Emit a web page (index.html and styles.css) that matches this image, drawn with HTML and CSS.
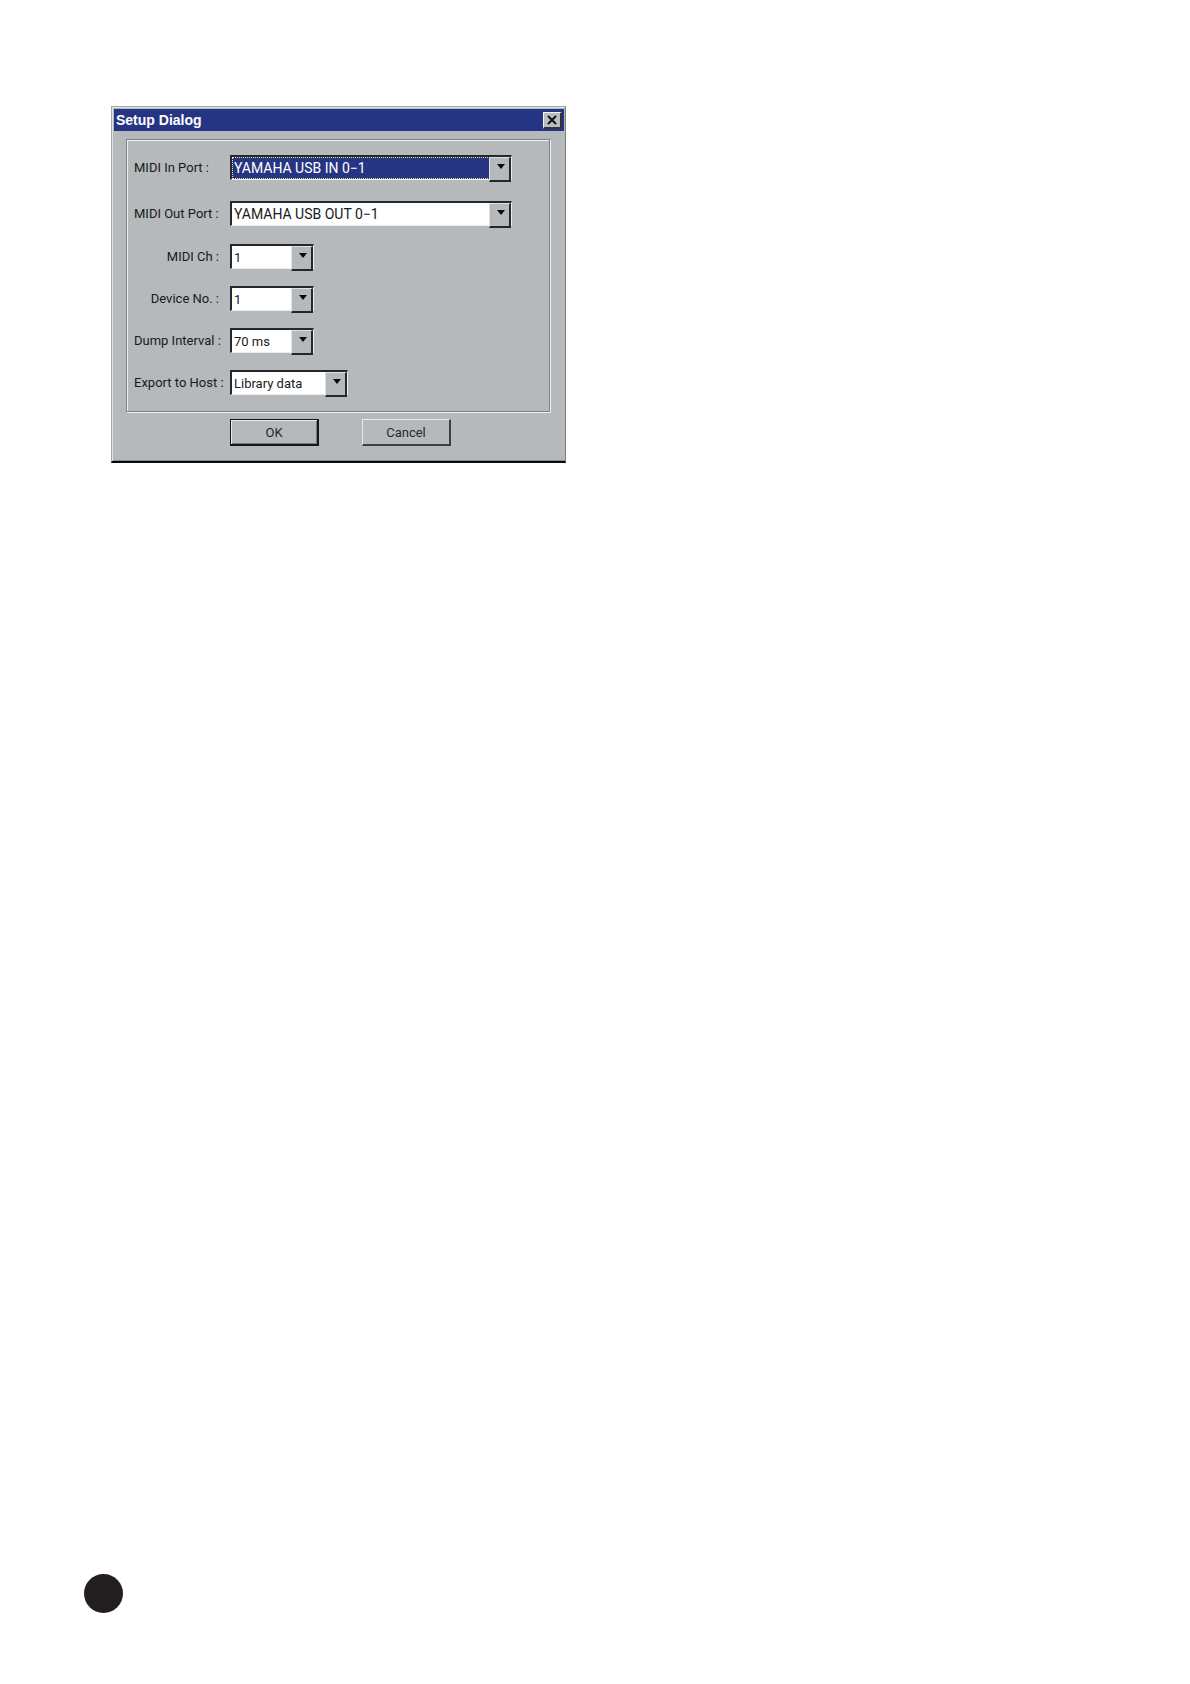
FILE: index.html
```html
<!DOCTYPE html>
<html lang="en">
<head>
  <meta charset="UTF-8">
  <title>Setup Dialog</title>
  <link rel="stylesheet" href="styles.css">
</head>
<body>

<main class="page">
  <form class="dialog" role="dialog" aria-labelledby="dialog-title">
    <header class="titlebar">
      <h1 id="dialog-title">Setup Dialog</h1>
      <button type="button" class="close" aria-label="Close">
        <svg width="12" height="10" viewBox="0 0 12 10"><path d="M2 1L10 9M10 1L2 9" stroke="#111" stroke-width="2"/></svg>
      </button>
    </header>

    <div class="content">
      <div class="settings">
        <div class="ports">
          <div class="row">
            <label for="midi-in">MIDI In Port :</label>
            <div class="combo wide active">
              <select id="midi-in"><option>YAMAHA USB IN 0−1</option></select>
            </div>
          </div>
          <div class="row">
            <label for="midi-out">MIDI Out Port :</label>
            <div class="combo wide">
              <select id="midi-out"><option>YAMAHA USB OUT 0−1</option></select>
            </div>
          </div>
        </div>
        <div class="options">
          <div class="row">
            <label for="midi-ch">MIDI Ch :</label>
            <div class="combo">
              <select id="midi-ch"><option>1</option></select>
            </div>
          </div>
          <div class="row">
            <label for="device-no">Device No. :</label>
            <div class="combo">
              <select id="device-no"><option>1</option></select>
            </div>
          </div>
          <div class="row">
            <label for="interval">Dump Interval :</label>
            <div class="combo">
              <select id="interval"><option>70 ms</option></select>
            </div>
          </div>
          <div class="row">
            <label for="export">Export to Host :</label>
            <div class="combo medium">
              <select id="export"><option>Library data</option></select>
            </div>
          </div>
        </div>
      </div>

      <div class="buttons">
        <button type="submit" class="btn default">OK</button>
        <button type="button" class="btn">Cancel</button>
      </div>
    </div>
  </form>

  <div class="page-marker"></div>
</main>

</body>
</html>
```

FILE: styles.css
```css
* {
  box-sizing: border-box;
}

body {
  margin: 0;
  background: #fff;
  color: #181a1c;
  font-family: Roboto, "Liberation Sans", sans-serif;
  font-size: 13px;
}

.page {
  min-height: 100vh;
  padding: 106px 84px 71px;
  display: flex;
  flex-direction: column;
  justify-content: space-between;
}

.dialog {
  width: 455px;
  margin-left: 27px;
  padding: 2px 1px 2px 2px;
  background: #b5b9bb;
  border: 1px solid #a3a7aa;
  border-right-color: #7b8083;
  border-bottom: 2px solid #08090a;
  box-shadow: inset 1px 1px #e0e3e4, inset 0 -1px #85898c;
}

/* title bar */
.titlebar {
  display: flex;
  align-items: center;
  justify-content: space-between;
  height: 22px;
  padding: 0 2px;
  background: #253583;
}

.titlebar h1 {
  margin: 0;
  color: #fff;
  font-family: "Liberation Sans", sans-serif;
  font-size: 14px;
  line-height: 20px;
}

.close {
  display: flex;
  align-items: center;
  justify-content: center;
  width: 19px;
  height: 17px;
  padding: 0;
  background: #b9bdbf;
  border: 1px solid #f4f5f5;
  border-right: 2px solid #303338;
  border-bottom: 2px solid #303338;
}

/* settings frame */
.content {
  padding: 8px 14px 13px 12px;
}

.settings {
  display: flex;
  flex-direction: column;
  gap: 18px;
  padding: 15px 7px 16px;
  border: 1px solid #7d8286;
  box-shadow: inset 1px 1px #eceeef, 1px 1px #eceeef;
}

.ports,
.options {
  display: flex;
  flex-direction: column;
}

.ports {
  gap: 21px;
}

.options {
  gap: 17px;
}

.row {
  display: flex;
  align-items: center;
  gap: 11px;
}

.row label {
  width: 85px;
  line-height: 16px;
  text-align: right;
  white-space: nowrap;
}

.ports label {
  text-align: left;
}

.combo {
  position: relative;
  width: 84px;
  height: 25px;
  background: #fff;
  border: 1px solid #eceeef;
  border-top: 2px solid #25282b;
  border-left: 2px solid #25282b;
}

.combo.medium {
  width: 118px;
}

.combo.wide {
  width: 282px;
}

.combo select {
  appearance: none;
  display: block;
  width: 100%;
  height: 100%;
  padding: 0 20px 0 2px;
  background: transparent;
  border: 0;
  border-radius: 0;
  color: #181a1c;
  font: inherit;
}

.combo.wide select {
  font-size: 14px;
}

.combo.active select {
  width: calc(100% - 19px);
  padding: 0 0 0 1px;
  background: #253583;
  border: 1px dotted #f2e98b;
  color: #fff;
}

/* drop-down button */
.combo::before {
  content: "";
  position: absolute;
  top: 0;
  right: 0;
  width: 19px;
  height: 22px;
  background: #b5b9bb;
  border: 1px solid #dfe2e3;
  border-right: 2px solid #25282b;
  border-bottom: 2px solid #25282b;
  pointer-events: none;
}

.combo::after {
  content: "";
  position: absolute;
  top: 7px;
  right: 6px;
  border: 4px solid transparent;
  border-top: 5px solid #08090a;
  border-bottom: 0;
  pointer-events: none;
}

/* bottom buttons */
.buttons {
  display: flex;
  gap: 43px;
  padding: 7px 0 0 104px;
}

.btn {
  width: 89px;
  height: 27px;
  padding: 0;
  background: #b5b9bb;
  border: 1px solid #e6e8e9;
  border-right: 2px solid #3c4043;
  border-bottom: 2px solid #3c4043;
  color: #25282b;
  font: inherit;
}

.btn.default {
  border: 1px solid #15171a;
  border-right-width: 2px;
  border-bottom-width: 2px;
  box-shadow: inset 1px 1px #e6e8e9, inset -1px -1px #777b7e;
}

.page-marker {
  width: 39px;
  height: 39px;
  border-radius: 50%;
  background: #231f20;
}
```
